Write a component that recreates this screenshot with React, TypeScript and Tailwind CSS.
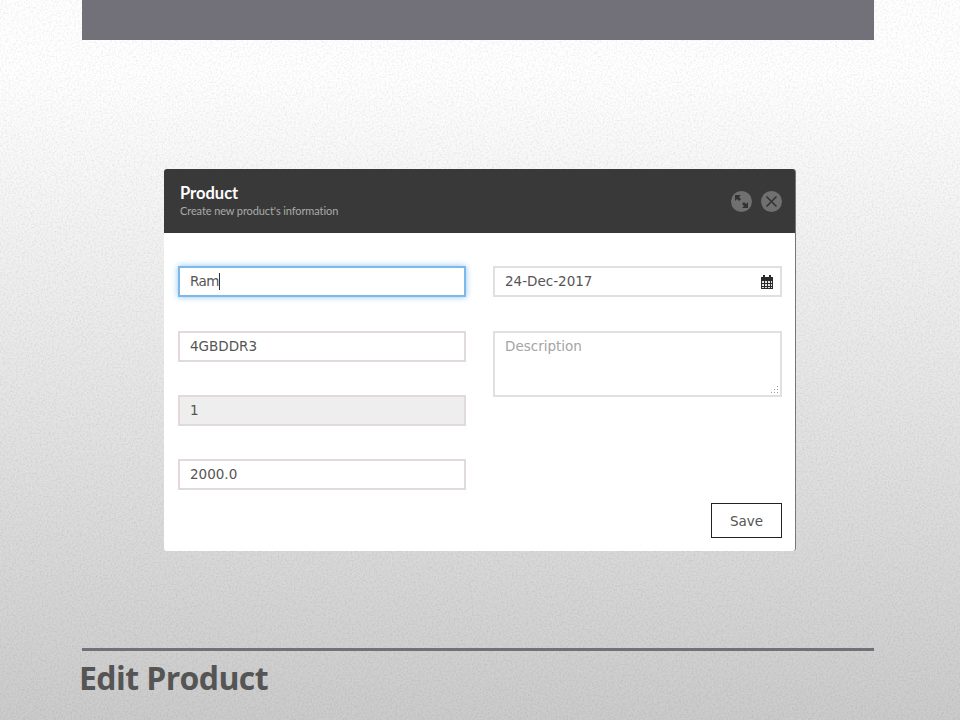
const mono = "font-['DejaVu_Sans',sans-serif] text-[13.5px] text-[#555555]";

function Field({ value, disabled, focused, caret }: { value: string; disabled?: boolean; focused?: boolean; caret?: boolean }) {
  const border = focused
    ? "border-2 border-[#7db8e8] shadow-[0_0_6px_rgba(102,175,233,0.75)] pl-[10px]"
    : "border-2 border-[#e0dadc] border-l-[#e8d6da] pl-[10px]";
  return (
    <div className={`h-[31px] flex items-center ${border} ${disabled ? "bg-[#eeeeee] border-[#d6d2d2]" : "bg-white"} ${mono}`}>
      <span className={caret ? "tracking-[-0.6px]" : ""}>{value}</span>
      {caret && <span className="w-px h-[17px] bg-[#333333]" />}
    </div>
  );
}

function CalendarIcon() {
  return (
    <svg width="12" height="14" viewBox="0 0 12 14" aria-hidden="true">
      <rect x="0" y="2" width="12" height="12" fill="#2a2a2a" />
      <rect x="2" y="0" width="2" height="3" fill="#2a2a2a" />
      <rect x="8" y="0" width="2" height="3" fill="#2a2a2a" />
      <g fill="#e4e4e4">
        <rect x="1" y="6" width="2" height="2" />
        <rect x="4" y="6" width="2" height="2" />
        <rect x="7" y="6" width="2" height="2" />
        <rect x="10" y="6" width="1" height="2" />
        <rect x="1" y="9" width="2" height="2" />
        <rect x="4" y="9" width="2" height="2" />
        <rect x="7" y="9" width="2" height="2" />
        <rect x="10" y="9" width="1" height="2" />
        <rect x="1" y="12" width="2" height="1" />
        <rect x="4" y="12" width="2" height="1" />
        <rect x="7" y="12" width="2" height="1" />
        <rect x="10" y="12" width="1" height="1" />
      </g>
    </svg>
  );
}

export default function App() {
  return (
    <div className="relative w-[960px] h-[720px] overflow-hidden flex flex-col bg-[linear-gradient(180deg,#ffffff_0%,#ffffff_10%,#cbcbcb_100%)]">
      <svg className="absolute inset-0 w-full h-full pointer-events-none opacity-[0.07]" aria-hidden="true">
        <filter id="grain">
          <feTurbulence type="fractalNoise" baseFrequency="0.55" numOctaves="3" stitchTiles="stitch" />
          <feColorMatrix type="matrix" values="0 0 0 0 0  0 0 0 0 0  0 0 0 0 0  0 0 0 2 -0.8" />
        </filter>
        <rect width="100%" height="100%" filter="url(#grain)" />
      </svg>

      <div className="relative ml-[82px] mr-[86px] h-10 shrink-0 bg-[#72717a]" />

      <div className="relative mt-[129px] mx-[164px] h-[382px] shrink-0 bg-white rounded-[3px] flex flex-col overflow-hidden border-r border-[#777777]">
        <div className="h-16 shrink-0 bg-[#393939] flex items-center justify-between pl-4 pr-[13px]">
          <div className="font-['Lato',sans-serif] -mt-[1px]">
            <div className="text-[16.5px] leading-[20px] font-bold text-white">Product</div>
            <div className="text-[11px] leading-[15px] tracking-[-0.1px] text-[#aaaaaa]">Create new product's information</div>
          </div>
          <div className="flex items-center gap-[9px] mt-[1px]">
            <div className="w-[21px] h-[21px] rounded-full bg-[#707070] flex items-center justify-center">
              <svg width="17" height="17" viewBox="0 0 17 17" fill="#333333">
                <path d="M2 2h6L6 4l2 2-2 2-2-2-2 2z" />
                <path d="M15 15H9l2-2-2-2 2-2 2 2 2-2z" />
              </svg>
            </div>
            <div className="w-[21px] h-[21px] rounded-full bg-[#707070] flex items-center justify-center">
              <svg width="13" height="13" viewBox="0 0 13 13" stroke="#333333" strokeWidth="1.6" fill="none">
                <path d="M1.5 1.5l10 10M11.5 1.5l-10 10" />
              </svg>
            </div>
          </div>
        </div>

        <div className="flex-1 relative pl-[14px] pt-[33px]">
          <div className="grid grid-cols-[288px_289px] gap-x-[27px]">
            <div className="flex flex-col">
              <Field value="Ram" focused caret />
              <div className="mt-[34px]"><Field value="4GBDDR3" /></div>
              <div className="mt-[33px]"><Field value="1" disabled /></div>
              <div className="mt-[33px]"><Field value="2000.0" /></div>
            </div>
            <div className="flex flex-col">
              <div className={`h-[31px] flex items-center justify-between pl-[10px] pr-[7px] border-2 border-[#e0e0e0] ${mono}`}>
                <span>24-Dec-2017</span>
                <CalendarIcon />
              </div>
              <div className={`relative mt-[34px] h-[66px] pt-[3px] pl-[10px] border-2 border-[#e0e0e0] ${mono}`}>
                <span className="text-[#a5a5a5]">Description</span>
                <svg className="absolute right-0 bottom-0" width="10" height="10" viewBox="0 0 10 10" fill="#999999">
                  <rect x="7" y="1" width="1" height="1" />
                  <rect x="7" y="4" width="1" height="1" />
                  <rect x="7" y="7" width="1" height="1" />
                  <rect x="4" y="4" width="1" height="1" />
                  <rect x="4" y="7" width="1" height="1" />
                  <rect x="1" y="7" width="1" height="1" />
                </svg>
              </div>
            </div>
          </div>
          <div className={`absolute right-[13px] bottom-[13px] w-[71px] h-[35px] pt-[1px] border border-[#222222] bg-white flex items-center justify-center ${mono} text-[#444444]`}>
            Save
          </div>
        </div>
      </div>

      <div className="relative mt-[97px] ml-[82px] mr-[86px] h-[3px] shrink-0 bg-[#72717a]" />
      <div className="relative ml-[79px] mt-[8px] font-['Open_Sans',sans-serif] font-bold text-[32px] leading-[38px] text-[#555555] tracking-[-0.6px]">
        Edit Product
      </div>
    </div>
  );
}
